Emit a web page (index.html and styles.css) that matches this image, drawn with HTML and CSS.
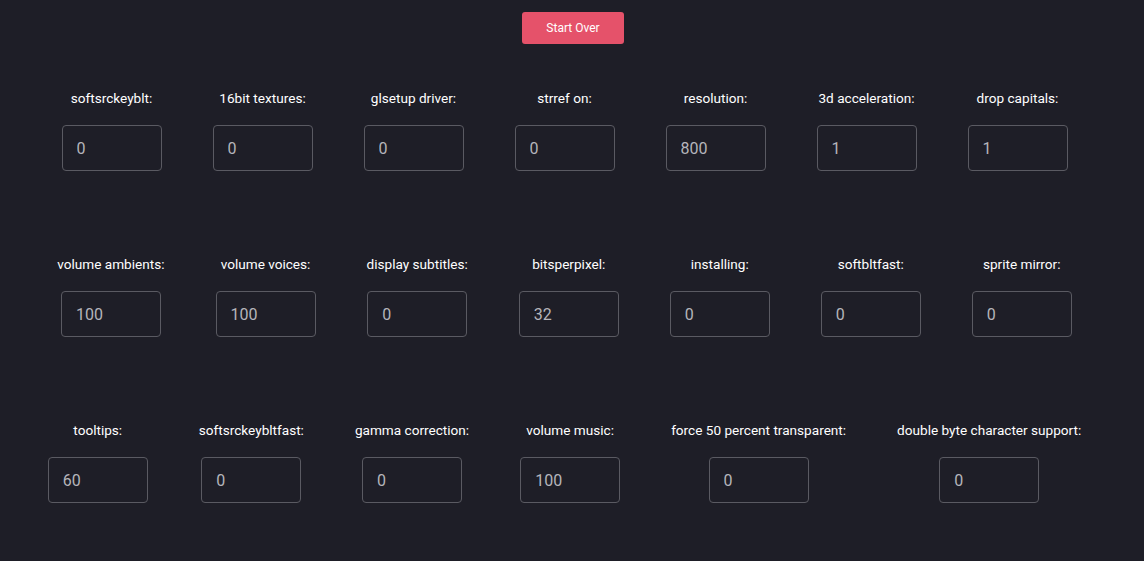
FILE: index.html
```html
<!DOCTYPE html>
<html>
<head>
<meta charset="utf-8">
<link rel="stylesheet" href="styles.css">
</head>
<body>
<div class="top"><button class="start">Start Over</button></div>
<div class="rows">
  <div class="row">
    <div class="field"><label>softsrckeyblt:</label><input value="0"></div>
    <div class="field"><label>16bit textures:</label><input value="0"></div>
    <div class="field"><label>glsetup driver:</label><input value="0"></div>
    <div class="field"><label>strref on:</label><input value="0"></div>
    <div class="field"><label>resolution:</label><input value="800"></div>
    <div class="field"><label>3d acceleration:</label><input value="1"></div>
    <div class="field"><label>drop capitals:</label><input value="1"></div>
  </div>
  <div class="row">
    <div class="field"><label>volume ambients:</label><input value="100"></div>
    <div class="field"><label>volume voices:</label><input value="100"></div>
    <div class="field"><label>display subtitles:</label><input value="0"></div>
    <div class="field"><label>bitsperpixel:</label><input value="32"></div>
    <div class="field"><label>installing:</label><input value="0"></div>
    <div class="field"><label>softbltfast:</label><input value="0"></div>
    <div class="field"><label>sprite mirror:</label><input value="0"></div>
  </div>
  <div class="row">
    <div class="field"><label>tooltips:</label><input value="60"></div>
    <div class="field"><label>softsrckeybltfast:</label><input value="0"></div>
    <div class="field"><label>gamma correction:</label><input value="0"></div>
    <div class="field"><label>volume music:</label><input value="100"></div>
    <div class="field"><label>force 50 percent transparent:</label><input value="0"></div>
    <div class="field"><label>double byte character support:</label><input value="0"></div>
  </div>
</div>
</body>
</html>
```
FILE: styles.css
```css
html, body {
  margin: 0;
  padding: 0;
  background: #1e1e27;
  font-family: Roboto, "Liberation Sans", sans-serif;
  color: #ffffff;
}
.top {
  display: flex;
  justify-content: center;
  padding-top: 12px;
  padding-left: 2px;
}
.start {
  width: 102px;
  height: 32px;
  background: #e5526a;
  color: #fff;
  border: none;
  border-radius: 3px;
  font-family: Roboto, "Liberation Sans", sans-serif;
  font-size: 12px;
  padding: 0;
}
.rows {
  display: flex;
  flex-direction: column;
  gap: 83px;
  padding-top: 44px;
}
.row {
  display: flex;
  justify-content: center;
  gap: 51px;
  padding-right: 15px;
}
.field {
  display: flex;
  flex-direction: column;
  align-items: center;
}
.field label {
  font-size: 13.6px;
  line-height: 20px;
  white-space: nowrap;
}
.field input {
  box-sizing: border-box;
  width: 100px;
  height: 46px;
  margin-top: 17px;
  background: transparent;
  border: 1px solid #5a5a62;
  border-radius: 4px;
  color: #b5b5bb;
  font-family: Roboto, "Liberation Sans", sans-serif;
  font-size: 16px;
  padding: 0 14px;
  outline: none;
}
```
